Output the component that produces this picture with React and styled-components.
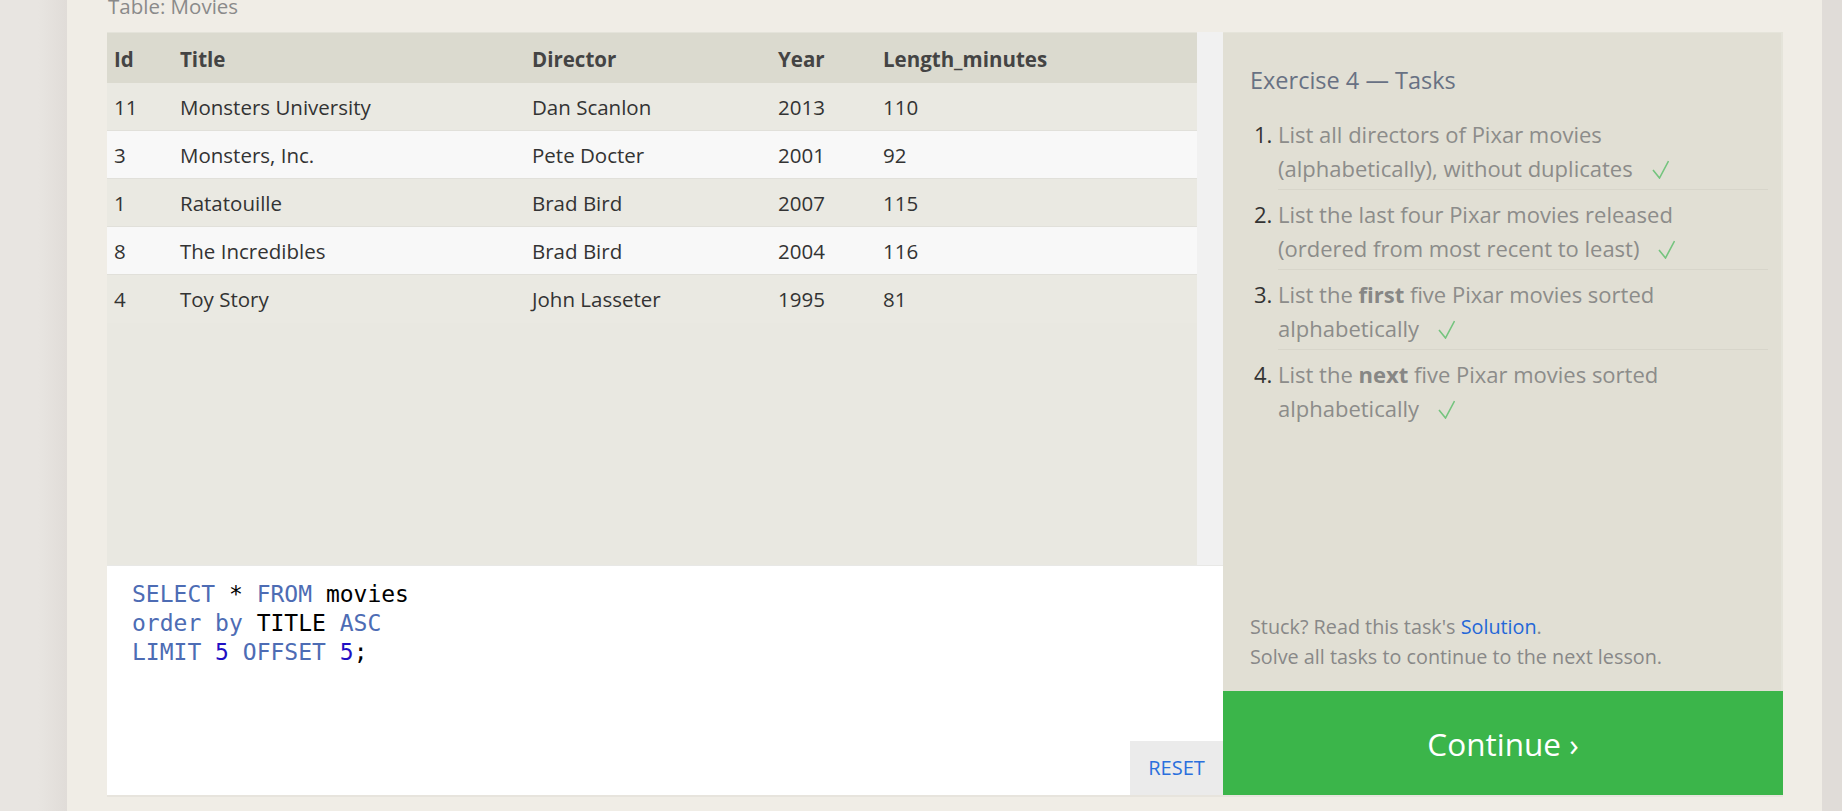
import React from "react";
import styled, { createGlobalStyle } from "styled-components";

const GlobalStyle = createGlobalStyle`
  html, body {
    margin: 0;
    padding: 0;
    height: 100%;
    overflow: hidden;
  }
  body {
    background: #e4e0dc;
    font-family: "Open Sans", "Noto Sans", sans-serif;
  }
`;

const Page = styled.div`
  display: flex;
  height: 811px;
  overflow: hidden;
  background: linear-gradient(to right, #e8e5e1 0, #e8e5e1 38px, #e0dcd8 67px);
  background-repeat: no-repeat;
  background-color: #e4e0dc;
`;

const Main = styled.div`
  margin-left: 67px;
  width: 1755px;
  box-sizing: border-box;
  padding: 0 39px 0 40px;
  background: #f0ede6;
`;

const TableLabel = styled.div`
  margin-top: -7px;
  height: 39px;
  font-size: 20.5px;
  line-height: 27px;
  color: #8a8a8a;
  padding-left: 1px;
`;

const Exercise = styled.div`
  display: grid;
  grid-template-columns: 1116px 560px;
  border-bottom: 2px solid #e7e4dd;
`;

const LeftColumn = styled.div`
  display: flex;
  flex-direction: column;
`;

const TableArea = styled.div`
  display: flex;
  height: 533px;
  background: #e9e8e1;
`;

const TableBody = styled.div`
  flex: 1;
  font-size: 20.5px;
  color: #333;
`;

const ScrollGutter = styled.div`
  width: 26px;
  background: #f1f1f1;
`;

const Row = styled.div`
  display: grid;
  grid-template-columns: 66px 352px 246px 105px 1fr;
  align-items: center;
  box-sizing: border-box;
  height: ${(p) => (p.$head ? "51px" : "48px")};
  padding-top: ${(p) => (p.$head ? "2px" : "0")};
  background: ${(p) => (p.$head ? "#dbdacf" : p.$even ? "#f8f8f8" : "#eae9e2")};
  border-bottom: ${(p) => (p.$head || p.$last ? "none" : "1px solid #e1e0da")};
  border-top: ${(p) => (p.$head ? "1px solid #e4e3da" : "none")};
  font-weight: ${(p) => (p.$head ? 700 : 400)};
  color: ${(p) => (p.$head ? "#444" : "#333")};
`;

const Cell = styled.div`
  padding-left: 7px;
  white-space: nowrap;
`;

const Editor = styled.div`
  position: relative;
  height: 229px;
  background: #fff;
  border-top: 1px solid #e8e8e6;
`;

const Code = styled.pre`
  margin: 0;
  padding: 14px 25px 0;
  font-family: "DejaVu Sans Mono", "Liberation Mono", monospace;
  font-size: 23px;
  line-height: 29px;
  color: #000;
`;

const Kw = styled.span`
  color: #4d6cb4;
`;

const Num = styled.span`
  color: #1f10c4;
`;

const ResetButton = styled.button`
  position: absolute;
  right: 0;
  bottom: 0;
  width: 93px;
  height: 54px;
  border: none;
  background: #ebebeb;
  color: #2a6fdd;
  font-family: "Open Sans", sans-serif;
  font-size: 20px;
  padding: 0 0 2px;
  cursor: pointer;
`;

const RightColumn = styled.div`
  display: flex;
  flex-direction: column;
`;

const Panel = styled.div`
  flex: 1;
  display: flex;
  flex-direction: column;
  justify-content: space-between;
  box-sizing: border-box;
  padding: 32px 13px 19px 27px;
  background: #e1dfd4;
  border-top: 1px solid #e5e4da;
  border-right: 2px solid #e5e4da;
`;

const Heading = styled.div`
  font-size: 23.5px;
  line-height: 31px;
  color: #687183;
`;

const TaskList = styled.ol`
  margin: 18px 0 0;
  padding-left: 28px;
  font-size: 22px;
  line-height: 34px;
  color: #333;
`;

const Task = styled.li`
  padding: 3px 58px 4px 0;
  margin-bottom: 4px;
  border-bottom: ${(p) => (p.$last ? "none" : "1px solid #d7d5ca")};
`;

const TaskText = styled.span`
  color: #8c8c8a;
  b {
    font-weight: 700;
    color: #878785;
  }
`;

const Check = styled.svg`
  width: 17px;
  height: 19px;
  margin-left: 19px;
  vertical-align: -2px;
`;

const Help = styled.div`
  font-size: 19.8px;
  line-height: 30px;
  color: #888;
`;

const SolutionLink = styled.a`
  color: #2467d8;
  text-decoration: none;
`;

const ContinueButton = styled.button`
  height: 104px;
  border: none;
  background: #3bb54a;
  color: #fff;
  font-family: "Open Sans", sans-serif;
  font-size: 31.5px;
  padding: 0;
  cursor: pointer;
`;

const movies = [
  [11, "Monsters University", "Dan Scanlon", 2013, 110],
  [3, "Monsters, Inc.", "Pete Docter", 2001, 92],
  [1, "Ratatouille", "Brad Bird", 2007, 115],
  [8, "The Incredibles", "Brad Bird", 2004, 116],
  [4, "Toy Story", "John Lasseter", 1995, 81],
];

const CheckMark = () => (
  <Check viewBox="0 0 17 19">
    <path d="M1 10 L7.5 18 L16.5 1" fill="none" stroke="#74c47e" strokeWidth="1.6" />
  </Check>
);

const tasks = [
  <>List all directors of Pixar movies (alphabetically), without duplicates</>,
  <>List the last four Pixar movies released (ordered from most recent to least)</>,
  <>
    List the <b>first</b> five Pixar movies sorted alphabetically
  </>,
  <>
    List the <b>next</b> five Pixar movies sorted alphabetically
  </>,
];

export default function App() {
  return (
    <>
      <GlobalStyle />
      <Page>
        <Main>
          <TableLabel>Table: Movies</TableLabel>
          <Exercise>
            <LeftColumn>
              <TableArea>
                <TableBody>
                  <Row $head>
                    <Cell>Id</Cell>
                    <Cell>Title</Cell>
                    <Cell>Director</Cell>
                    <Cell>Year</Cell>
                    <Cell>Length_minutes</Cell>
                  </Row>
                  {movies.map((m, i) => (
                    <Row key={m[0]} $even={i % 2 === 1} $last={i === movies.length - 1}>
                      {m.map((v, j) => (
                        <Cell key={j}>{v}</Cell>
                      ))}
                    </Row>
                  ))}
                </TableBody>
                <ScrollGutter />
              </TableArea>
              <Editor>
                <Code>
                  <Kw>SELECT</Kw> * <Kw>FROM</Kw> movies{"\n"}
                  <Kw>order by</Kw> TITLE <Kw>ASC</Kw>
                  {"\n"}
                  <Kw>LIMIT</Kw> <Num>5</Num> <Kw>OFFSET</Kw> <Num>5</Num>;
                </Code>
                <ResetButton>RESET</ResetButton>
              </Editor>
            </LeftColumn>
            <RightColumn>
              <Panel>
                <div>
                  <Heading>Exercise 4 — Tasks</Heading>
                  <TaskList>
                    {tasks.map((t, i) => (
                      <Task key={i} $last={i === tasks.length - 1}>
                        <TaskText>{t}</TaskText>
                        <CheckMark />
                      </Task>
                    ))}
                  </TaskList>
                </div>
                <Help>
                  Stuck? Read this task's <SolutionLink href="#">Solution</SolutionLink>.
                  <br />
                  Solve all tasks to continue to the next lesson.
                </Help>
              </Panel>
              <ContinueButton>Continue ›</ContinueButton>
            </RightColumn>
          </Exercise>
        </Main>
      </Page>
    </>
  );
}
